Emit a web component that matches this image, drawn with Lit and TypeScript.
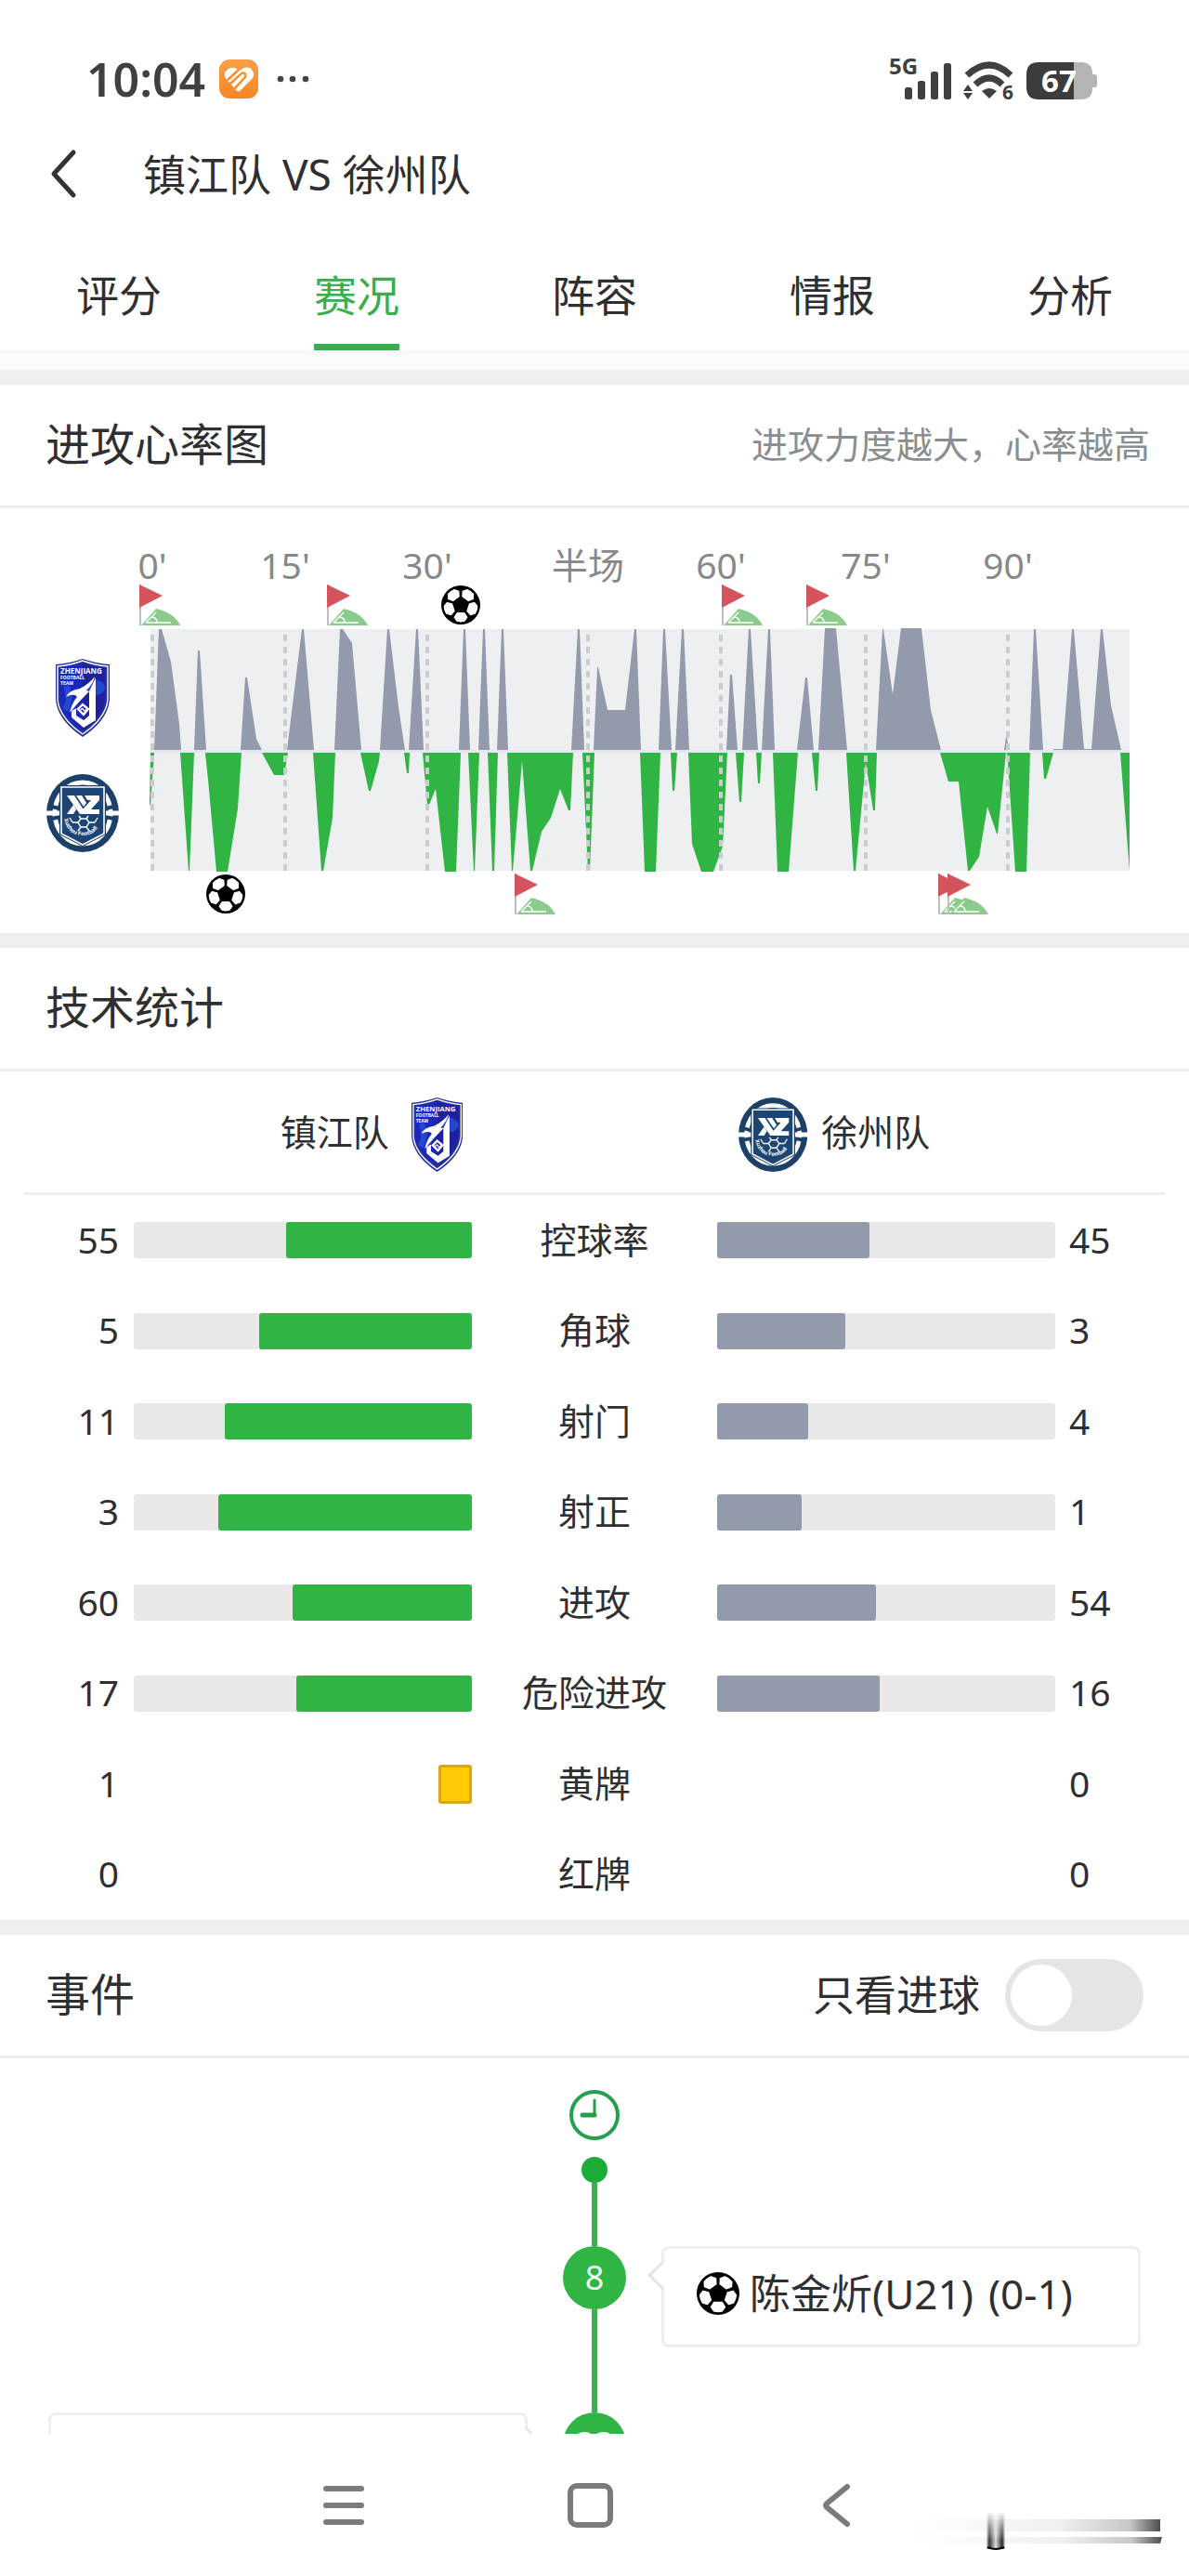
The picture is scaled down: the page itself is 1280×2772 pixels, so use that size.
import { LitElement, html, svg, css } from 'lit';
import { customElement, property, state } from 'lit/decorators.js';
import { classMap } from 'lit/directives/class-map.js';

const TABS = ['评分', '赛况', '阵容', '情报', '分析'];

const STATS = [
	{ label: '控球率', home: 55, away: 45 },
	{ label: '角球', home: 5, away: 3 },
	{ label: '射门', home: 11, away: 4 },
	{ label: '射正', home: 3, away: 1 },
	{ label: '进攻', home: 60, away: 54 },
	{ label: '危险进攻', home: 17, away: 16 },
	{ label: '黄牌', home: 1, away: 0, cards: true },
	{ label: '红牌', home: 0, away: 0, cards: true },
];

const TICKS = [
	{ x: 2, label: "0'" },
	{ x: 145, label: "15'" },
	{ x: 298, label: "30'" },
	{ x: 471, label: '半场' },
	{ x: 614, label: "60'" },
	{ x: 770, label: "75'" },
	{ x: 923, label: "90'" },
];

// attack intensity, home team above the middle line
const HOME_PEAKS = [
	'4,130 9,0 12,0 22,35 31,102 33,130',
	'47,130 51,23 53,23 60,130',
	'97,130 102,52 104,52 114,118 120,130',
	'147,130 163,0 165,0 176,130',
	'198,130 204,0 207,0 217,15 227,130',
	'247,130 255,0 257,0 267,84 274,130',
	'278,130 286,0 288,0 294,130',
	'332,130 337,0 339,0 344,130',
	'353,130 358,0 360,0 365,130',
	'373,130 378,0 380,0 385,130',
	'453,130 460,0 462,0 467,130',
	'477,130 481,41 482,41 492,87 511,87 521,0 523,0 528,130',
	'547,130 552,0 554,0 561,130',
	'565,130 572,0 574,0 580,130',
	'620,130 624,49 626,49 632,130',
	'637,130 644,0 646,0 654,130',
	'658,130 665,0 667,0 672,130',
	'696,130 705,52 707,52 714,130',
	'719,130 726,-1 738,-1 750,130',
	'781,130 788,0 789,0 799,70 808,-1 830,-1 840,87 851,130',
	'919,130 921,116 922,116 924,130',
	'946,130 951,0 953,0 961,130',
	'972,130 972,129 982,129 992,0 994,0 1005,129 1013,129 1023,0 1025,0 1034,82 1045,130',
];

// away team below the middle line
const AWAY_PEAKS = [
	'0,133 4,133 0,190 -1,188',
	'32,133 47,133 42,260 41,260',
	'59,133 98,133 94,193 83,261 71,261 62,162',
	'120,133 148,133 144,157 133,157',
	'175,133 199,133 196,203 186,260 184,260',
	'226,133 247,133 246,142 237,174 235,174',
	'273,133 279,133 278,155 276,155',
	'293,133 334,133 329,261 317,261 307,172 300,189 298,189',
	'342,133 354,133 349,260 348,260',
	'363,133 374,133 370,260 368,260',
	'384,133 455,133 452,195 450,195 441,172 431,203 421,218 411,260 409,260 400,142 390,260 389,260',
	'465,133 478,133 473,260 471,260',
	'527,133 549,133 544,261 532,261',
	'560,133 567,133 564,174 562,174',
	'579,133 621,133 616,234 606,261 593,261 583,231',
	'630,133 639,133 636,186 634,186',
	'652,133 658,133 656,166 654,166',
	'670,133 697,133 687,261 675,261',
	'712,133 720,133 718,174 716,174',
	'749,133 782,133 780,195 778,195 770,144 759,260 757,260',
	'850,133 921,133 912,220 911,220 901,191 892,245 882,260 880,260 870,164 859,164',
	'922,133 947,133 943,261 931,261 923,144',
	'960,133 972,133 964,161 962,161',
	'1044,133 1054,133 1054,260',
];

const CORNERS = [[-12, -48], [190, -48], [615, -48], [706, -48], [392, 263], [848, 263], [858, 263]];
const GOALS = [[313, -47], [60, 264]];

const ball = svg`
	<circle cx="21" cy="21" r="21" fill="#000"/>
	${[0, 72, 144, 216, 288].map(a => svg`
		<path transform="rotate(${a} 21 21)" fill="#fff" stroke="#fff" stroke-width="1" stroke-linejoin="round"
			d="M17 29.5L25 29.5L28 34.2L25.2 38.4Q21 39.6 16.8 38.4L14 34.2Z"/>`)}
`;

const cornerFlag = svg`
	<path d="M1 0V44" stroke="#bfbfbf" stroke-width="2"/>
	<path d="M0 0L25 12L0 25Z" fill="#d4545d"/>
	<path d="M2 44L18 26Q37 30 44 44Z" fill="#8bcb8b"/>
	<path d="M7 41L18 30M7 41H34M13 35Q19 35 19 41" fill="none" stroke="#fff" stroke-width="1.4"/>
`;

@customElement('team-crest')
export class TeamCrest extends LitElement {
	@property() team = 'home';

	static styles = css`
		:host {
			display: block;
			line-height: 0;
		}

		svg {
			display: block;
			width: auto;
			height: 84px;
		}

		:host([small]) svg {
			height: 80px;
		}

		text {
			font-family: "Open Sans", "Liberation Sans", sans-serif;
			font-weight: 700;
			fill: #fff;
		}
	`;

	homeCrest() {
		return html`
			<svg viewBox="0 0 58 84" role="img" aria-label="镇江队">
				<path d="M29 0Q44 5 58 6V44Q56 66 29 84Q2 66 0 44V6Q14 5 29 0Z" fill="#2430a0"/>
				<path d="M29 2Q43 7 56 8V44Q54 64 29 81Q4 64 2 44V8Q15 7 29 2Z" fill="none" stroke="#fff" stroke-width="1.4"/>
				<path d="M29 5Q42 9 53 10V44Q51 62 29 77Q7 62 5 44V10Q16 9 29 5Z" fill="#1b26c0"/>
				<path d="M29 5Q42 9 53 10V44Q51 62 29 77Z" fill="#20209a"/>
				<ellipse cx="43" cy="31" rx="10" ry="8" fill="#2447d0"/>
				<path d="M8 30Q14 45 7 52Q14 62 16 50Q20 38 14 28Z" fill="#2447d0"/>
				<path d="M42 19Q40 27 33 34L36 35Q24 47 15 58Q17 48 23 41L21 39Q16 38 11 41Q14 34 26 32Q36 27 42 19Z" fill="#fff"/>
				<path d="M43 20V66L30 74L17 63V56L22 53V61L30 66L36 61V35Z" fill="#fff"/>
				<path d="M24 54L29 49L35 54L30 60Z" fill="none" stroke="#fff" stroke-width="2.4"/>
				<path d="M27 55Q29 52 30 55T33 54" fill="none" stroke="#fff" stroke-width="1.4"/>
				<text x="5" y="16" font-size="8">ZHENJIANG</text>
				<text x="5" y="22" font-size="5">FOOTBALL</text>
				<text x="5" y="28" font-size="5">TEAM</text>
			</svg>`;
	}

	awayCrest() {
		return html`
			<svg viewBox="0 0 78 84" role="img" aria-label="徐州队">
				<ellipse cx="39" cy="42" rx="39" ry="42" fill="#1d4069"/>
				<ellipse cx="39" cy="42" rx="30" ry="33" fill="none" stroke="#fff" stroke-width="5"/>
				<ellipse cx="39" cy="42" rx="24" ry="27" fill="#1d4069"/>
				<path d="M2 34L14 37M64 37L76 34M2 49L14 46M64 46L76 49" stroke="#1d4069" stroke-width="4"/>
				<path d="M0 42H15M63 42H78" stroke="#fff" stroke-width="5"/>
				<path d="M14 12H64V65L39 78L14 65Z" fill="#1d4069"/>
				<path d="M16 14H62V64L39 76L16 64Z" fill="#1c4576" stroke="#fff" stroke-width="1.6"/>
				<path d="M22 23H30L43 43H36Z" fill="#fff"/>
				<path d="M32 23H38L43 31L40 35Z" fill="#fff"/>
				<path d="M22 43L29 33L32 38L29 43Z" fill="#fff"/>
				<path d="M41 23H57V28L48 38H57V43H39V38L48 28H44Z" fill="#fff"/>
				<path d="M34 52L37 48H43L46 52L43 57H37ZM34 52H28M46 52H52M37 57L34 61M43 57L46 61M28 52L25 47M52 52L55 47M37 48L35 45M43 48L45 45" fill="none" stroke="#fff" stroke-width="1.4"/>
				<path id="arc" d="M19 48Q23 66 39 66Q55 66 59 48" fill="none"/>
				<text font-size="6"><textPath href="#arc">Xuzhou Football</textPath></text>
			</svg>`;
	}

	render() {
		return this.team === 'home' ? this.homeCrest() : this.awayCrest();
	}
}

@customElement('attack-chart')
export class AttackChart extends LitElement {
	static styles = css`
		:host {
			display: block;
		}

		svg {
			display: block;
			width: 100%;
			height: auto;
		}

		text {
			font: 39px "Noto Sans", "Noto Sans CJK SC", sans-serif;
			fill: #888;
			text-anchor: middle;
		}

		.home {
			fill: #929aab;
		}

		.away {
			fill: #30b444;
		}

		.tick {
			stroke: #cbccce;
			stroke-width: 4;
			stroke-dasharray: 7 6;
		}
	`;

	render() {
		return html`
			<svg viewBox="0 0 1090 410" role="img" aria-label="进攻心率图">
				<g transform="translate(22 97)">
					${TICKS.map(t => svg`<text x=${t.x} y="-54">${t.label}</text>`)}
					<rect width="1054" height="260" fill="#edeff1"/>
					<rect y="130" width="1054" height="3" fill="#e4e8ef"/>
					<g class="home">${HOME_PEAKS.map(p => svg`<polygon points=${p}></polygon>`)}</g>
					<g class="away">${AWAY_PEAKS.map(p => svg`<polygon points=${p}></polygon>`)}</g>
					${TICKS.map(t => svg`<path class="tick" d="M${t.x} 6V260"></path>`)}
					${CORNERS.map(([x, y]) => svg`<g transform="translate(${x} ${y})">${cornerFlag}</g>`)}
					${GOALS.map(([x, y]) => svg`<g transform="translate(${x} ${y})">${ball}</g>`)}
				</g>
			</svg>`;
	}
}

@customElement('app-root')
export class AppRoot extends LitElement {
	@state() activeTab = 1;
	@state() goalsOnly = false;

	static styles = css`
		:host {
			display: flex;
			flex-direction: column;
			min-height: 100vh;
			background: #fff;
			color: #2f2f31;
			font-family: "Noto Sans", "Noto Sans CJK SC", sans-serif;
			font-size: 39px;
			line-height: 48px;
		}

		* {
			box-sizing: border-box;
		}

		button {
			display: block;
			padding: 0;
			border: 0;
			background: none;
			color: inherit;
			font: inherit;
		}

		svg {
			display: block;
			flex: none;
		}

		h1, h2 {
			margin: 0;
			font-weight: 400;
		}

		/* status bar */
		.status {
			display: flex;
			align-items: center;
			height: 137px;
			padding: 33px 99px 0 93px;
		}

		.time {
			margin-right: 15px;
			color: #404040;
			font-size: 50px;
			font-weight: 600;
		}

		.dots {
			margin-left: 20px;
		}

		.signals {
			display: flex;
			gap: 12px;
			margin-left: auto;
		}

		.signals text {
			font-weight: 700;
		}

		/* title and tabs */
		.title-bar {
			display: flex;
			align-items: center;
			height: 100px;
			padding-left: 52px;
			gap: 70px;
		}

		.title-bar h1 {
			font-size: 46px;
		}

		.tabs {
			display: flex;
			height: 140px;
		}

		.tab {
			display: flex;
			flex: 1;
			flex-direction: column;
			align-items: center;
			justify-content: flex-end;
			gap: 29px;
			font-size: 46px;
		}

		.tab::after {
			content: "";
			width: 92px;
			height: 7px;
		}

		.tab.active {
			color: #3aad4e;
		}

		.tab.active::after {
			background: #3aad4e;
		}

		.strip {
			height: 21px;
			background: linear-gradient(#f6f6f6, #fbfbfb 30%);
		}

		/* sections */
		section {
			border-top: 16px solid #edeff1;
		}

		.head {
			display: flex;
			align-items: center;
			justify-content: space-between;
			height: 133px;
			padding: 0 49px;
			border-bottom: 3px solid #eeeff0;
		}

		.head h2, .hint {
			padding-bottom: 3px;
		}

		.head h2 {
			font-size: 48px;
		}

		.hint {
			margin-right: -7px;
			color: #8a8e91;
		}

		.chart {
			display: flex;
			gap: 12px;
			padding: 33px 50px 14px 49px;
		}

		.crests {
			display: flex;
			flex-direction: column;
			align-items: center;
			gap: 40px;
			padding-top: 129px;
			width: 79px;
		}

		attack-chart {
			flex: 1;
		}

		.teams {
			display: grid;
			grid-template-columns: 1fr 1fr;
			column-gap: 297px;
			align-items: center;
			height: 133px;
			margin: 0 26px;
			padding: 6px 0 0 13px;
			border-bottom: 3px solid #eeeff0;
		}

		.team {
			display: flex;
			align-items: center;
			gap: 15px;
		}

		.team span {
			padding-bottom: 6px;
		}

		.team.home {
			justify-content: flex-end;
			gap: 24px;
		}

		.stats {
			width: 100%;
			height: 780px;
			table-layout: fixed;
			border-collapse: collapse;
		}

		.stats td, .stats th {
			padding: 0;
			font-weight: 400;
		}

		.value {
			width: 144px;
		}

		.label {
			width: 264px;
		}

		.stats th.label {
			padding-bottom: 2px;
		}

		.stats .value.home {
			padding: 0 16px 2px 0;
			text-align: right;
		}

		.stats .value.away {
			padding: 0 0 2px 15px;
		}

		.bar {
			display: flex;
			height: 39px;
			border-radius: 3px;
			background: #e8e8e8;
		}

		.bar.home {
			justify-content: flex-end;
		}

		.fill {
			border-radius: 3px;
			background: #929aab;
		}

		.home .fill {
			background: #30b444;
		}

		.card {
			width: 36px;
			height: 42px;
			margin-left: auto;
			border: 3px solid #dba411;
			border-radius: 3px;
			background: #ffcb05;
		}

		/* events */
		.filter {
			display: flex;
			align-items: center;
			gap: 27px;
			font-size: 45px;
		}

		.switch {
			display: flex;
			align-items: center;
			appearance: none;
			width: 149px;
			height: 78px;
			margin: 0;
			padding: 6px;
			border-radius: 39px;
			background: #e5e5e5;
		}

		.switch::before {
			content: "";
			width: 66px;
			height: 66px;
			border-radius: 50%;
			background: #fff;
		}

		.switch:checked {
			justify-content: flex-end;
			background: #30b444;
		}

		.events {
			height: 404px;
			overflow: hidden;
		}

		.start {
			display: flex;
			flex-direction: column;
			align-items: center;
			padding-top: 33px;
		}

		.dot {
			width: 28px;
			height: 28px;
			margin-top: 17px;
			border-radius: 50%;
			background: #1aac37;
		}

		.line {
			width: 6px;
			background: #3fae53;
		}

		.start .line {
			height: 68px;
		}

		.event {
			display: grid;
			grid-template-columns: 1fr 144px 1fr;
			height: 179px;
			padding: 0 52px;
		}

		.minute {
			display: flex;
			grid-column: 2;
			grid-row: 1;
			flex-direction: column;
			align-items: center;
		}

		.minute .line {
			flex: 1;
		}

		.badge {
			width: 68px;
			height: 68px;
			border-radius: 50%;
			background: #30b444;
			color: #f1fff3;
			font-size: 36px;
			line-height: 68px;
			text-align: center;
		}

		.bubble {
			position: relative;
			display: flex;
			grid-column: 3;
			grid-row: 1;
			align-items: center;
			height: 109px;
			padding: 0 0 8px 35px;
			border: 3px solid #eee;
			border-radius: 8px;
			font-size: 44px;
		}

		.bubble.left {
			grid-column: 1;
		}

		.bubble::before {
			content: "";
			position: absolute;
			top: 17px;
			left: -13px;
			width: 20px;
			height: 20px;
			border: solid #e4e4e4;
			border-width: 0 0 3px 3px;
			background: #fff;
			transform: rotate(45deg);
		}

		.bubble.left::before {
			right: -13px;
			left: auto;
			border-width: 3px 3px 0 0;
		}

		.player {
			margin: 0 16px 0 11px;
		}

		/* system navigation */
		.nav {
			position: relative;
			display: flex;
			flex: 1;
			align-items: center;
			justify-content: center;
			gap: 216px;
			min-height: 153px;
			padding-right: 9px;
		}

		.smudge {
			position: absolute;
			right: 26px;
			bottom: 24px;
		}
	`;

	renderStatus() {
		return html`
			<div class="status">
				<span class="time">10:04</span>
				<svg width="42" height="42" viewBox="0 0 42 42">
					<defs>
						<linearGradient id="app" x1="0" y1="0" x2="0" y2="1">
							<stop offset="0" stop-color="#f7a04c"/>
							<stop offset="1" stop-color="#f98523"/>
						</linearGradient>
					</defs>
					<rect width="42" height="42" rx="11" fill="url(#app)"/>
					<path d="M12 9Q17 8 20 11L22 12Q27 7 33 9Q39 14 36 20L22 34Q20 35 18 33L7 20Q3 13 12 9Z" fill="#fff"/>
					<path d="M21 11L9 22M11 27L24 15Q29 13 28 19L16 32" fill="none" stroke="#f88f30" stroke-width="2.6"/>
				</svg>
				<svg class="dots" width="36" height="8" viewBox="0 0 36 8" fill="#444">
					<circle cx="4" cy="4" r="3.3"/><circle cx="17" cy="4" r="3.3"/><circle cx="31" cy="4" r="3.3"/>
				</svg>
				<div class="signals">
					<svg width="70" height="66" viewBox="-2 -10 70 66" fill="#404040">
						<text x="0" y="18" font-size="24">5G</text>
						<rect x="17" y="32" width="8" height="13" rx="2.5"/>
						<rect x="31" y="25" width="8" height="20" rx="2.5"/>
						<rect x="45" y="15" width="8" height="30" rx="2.5"/>
						<rect x="59" y="6" width="8" height="39" rx="2.5"/>
					</svg>
					<svg width="56" height="66" viewBox="0 -10 56 66" fill="#404040">
						<path d="M4 19Q28 -3 51 19M13 29Q28 15 42 29" fill="none" stroke="#404040" stroke-width="7"/>
						<path d="M20 36Q28 30 36 36L28 44Z"/>
						<path d="M0 36L5 29L10 36ZM0 38H10L5 45Z"/>
						<text x="42" y="45" font-size="21">6</text>
					</svg>
					<svg width="76" height="66" viewBox="0 -10 76 66">
						<path d="M70 18H73Q76 18 76 21V29Q76 32 73 32H70Z" fill="#b4b4b4"/>
						<path d="M51 5H59Q71 5 71 17V33Q71 45 59 45H51Z" fill="#b4b4b4"/>
						<path d="M51 5H13Q0 5 0 18V32Q0 45 13 45H51Z" fill="#3c3c3c"/>
						<text x="35" y="37" font-size="33" text-anchor="middle" fill="#fff">67</text>
					</svg>
				</div>
			</div>`;
	}

	renderStat(row: any) {
		const total = row.home + row.away;
		const percent = (n: number) => Math.round(n / total * 100);
		return html`
			<tr>
				<td class="value home">${row.home}</td>
				<td>${row.cards
					? (row.home ? html`<div class="card"></div>` : '')
					: html`<div class="bar home"><div class="fill" style="width:${percent(row.home)}%"></div></div>`}
				</td>
				<th class="label" scope="row">${row.label}</th>
				<td>${row.cards
					? ''
					: html`<div class="bar"><div class="fill" style="width:${percent(row.away)}%"></div></div>`}
				</td>
				<td class="value away">${row.away}</td>
			</tr>`;
	}

	render() {
		return html`
			${this.renderStatus()}
			<header class="title-bar">
				<button aria-label="返回">
					<svg width="32" height="54" viewBox="0 0 32 54"><path d="M27 4L6 27L27 50" fill="none" stroke="#333" stroke-width="5" stroke-linecap="round" stroke-linejoin="round"/></svg>
				</button>
				<h1>镇江队 VS 徐州队</h1>
			</header>
			<nav class="tabs">
				${TABS.map((tab, i) => html`
					<button class="tab ${classMap({ active: i === this.activeTab })}" @click=${() => { this.activeTab = i; }}>${tab}</button>`)}
			</nav>
			<div class="strip"></div>

			<section>
				<div class="head">
					<h2>进攻心率图</h2>
					<span class="hint">进攻力度越大，心率越高</span>
				</div>
				<div class="chart">
					<div class="crests">
						<team-crest team="home"></team-crest>
						<team-crest team="away"></team-crest>
					</div>
					<attack-chart></attack-chart>
				</div>
			</section>

			<section>
				<div class="head"><h2>技术统计</h2></div>
				<div class="teams">
					<div class="team home"><span>镇江队</span><team-crest small team="home"></team-crest></div>
					<div class="team"><team-crest small team="away"></team-crest><span>徐州队</span></div>
				</div>
				<table class="stats">
					<colgroup><col class="value"><col><col class="label"><col><col class="value"></colgroup>
					<tbody>${STATS.map(row => this.renderStat(row))}</tbody>
				</table>
			</section>

			<section>
				<div class="head">
					<h2>事件</h2>
					<label class="filter">只看进球
						<input class="switch" type="checkbox" .checked=${this.goalsOnly}
							@change=${(e: Event) => { this.goalsOnly = (e.target as HTMLInputElement).checked; }}>
					</label>
				</div>
				<div class="events">
					<div class="start">
						<svg width="56" height="56" viewBox="0 0 56 56" fill="none" stroke="#22a04b" stroke-linecap="round">
							<circle cx="28" cy="28" r="25" stroke-width="4"/>
							<path d="M28 12V28" stroke-width="3"/>
							<path d="M28 28H15" stroke-width="5"/>
						</svg>
						<div class="dot"></div>
						<div class="line"></div>
					</div>
					<div class="event">
						<div class="minute"><span class="badge">8</span><div class="line"></div></div>
						<div class="bubble">
							<svg width="46" height="46" viewBox="0 0 42 42">${ball}</svg>
							<span class="player">陈金炘(U21)</span>
							<span>(0-1)</span>
						</div>
					</div>
					<div class="event">
						<div class="bubble left"></div>
						<div class="minute"><span class="badge">33</span></div>
					</div>
				</div>
			</section>

			<footer class="nav">
				<button aria-label="菜单">
					<svg width="49" height="50" viewBox="0 0 49 50" stroke="#7b7b7b" stroke-width="6" stroke-linecap="round"><path d="M5 7H43M5 25H43M5 43H43"/></svg>
				</button>
				<button aria-label="主页">
					<svg width="49" height="50" viewBox="0 0 49 50" fill="none" stroke="#7b7b7b" stroke-width="6"><rect x="3" y="4" width="43" height="42" rx="7"/></svg>
				</button>
				<button aria-label="后退">
					<svg width="49" height="50" viewBox="0 0 49 50" fill="none" stroke="#7b7b7b" stroke-width="6" stroke-linecap="round" stroke-linejoin="round"><path d="M36 5L14 23Q12 25 14 27L36 45"/></svg>
				</button>
				<svg class="smudge" width="274" height="46" viewBox="0 0 274 46">
					<defs>
						<linearGradient id="trail"><stop offset="0" stop-opacity="0"/><stop offset=".6" stop-opacity=".06"/><stop offset=".88" stop-opacity=".22"/><stop offset="1" stop-opacity=".7"/></linearGradient>
						<linearGradient id="tube"><stop offset="0" stop-opacity=".1"/><stop offset=".15" stop-opacity=".8"/><stop offset=".5" stop-opacity=".12"/><stop offset=".85" stop-opacity=".85"/><stop offset="1" stop-opacity=".1"/></linearGradient>
						<linearGradient id="fade" x1="0" y1="0" x2="0" y2="1"><stop offset="0" stop-color="#000"/><stop offset=".7" stop-color="#fff"/></linearGradient>
						<mask id="fadeMask"><rect x="80" y="0" width="30" height="46" fill="url(#fade)"/></mask>
					</defs>
					<rect x="0" y="9" width="269" height="13" fill="url(#trail)"/>
					<path d="M0 28H271L269 35H0Z" fill="url(#trail)"/>
					<rect x="82" y="2" width="20" height="39" fill="url(#tube)" mask="url(#fadeMask)"/>
					<path d="M83 39Q92 43 101 39" fill="none" stroke="#000" stroke-width="2"/>
				</svg>
			</footer>`;
	}
}
